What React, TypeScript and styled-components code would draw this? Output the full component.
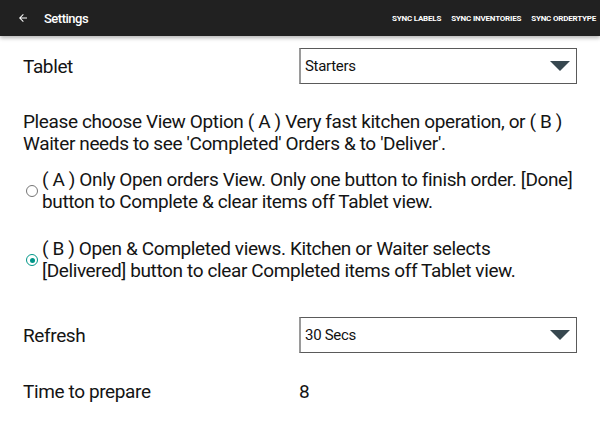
import styled, { createGlobalStyle } from "styled-components";

const GlobalStyle = createGlobalStyle`
  body {
    margin: 0;
    background: #ffffff;
    font-family: Roboto, "Liberation Sans", sans-serif;
    color: #141414;
  }
`;

const Toolbar = styled.header`
  height: 36px;
  background: #212121;
  display: flex;
  align-items: center;
  padding: 0 4px 0 17px;
  box-shadow: 0 2px 4px rgba(0, 0, 0, 0.3);
  position: relative;
`;

const BackButton = styled.span`
  display: flex;
  align-items: center;
  width: 27px;
`;

const Title = styled.h1`
  margin: 0;
  flex: 1;
  color: #ffffff;
  font-size: 13px;
  font-weight: 500;
  letter-spacing: -0.5px;
`;

const Actions = styled.nav`
  display: flex;
  gap: 10px;
`;

const Action = styled.span`
  color: #ffffff;
  font-size: 8px;
  font-weight: 700;
  letter-spacing: -0.2px;
  text-transform: uppercase;
`;

const Content = styled.main`
  padding: 12px 23px 0;
  font-size: 19px;
  letter-spacing: -0.38px;
`;

const FieldRow = styled.div<{ $mt?: number }>`
  display: grid;
  grid-template-columns: 276px 278px;
  align-items: center;
  min-height: 36px;
  margin-top: ${(p) => p.$mt ?? 0}px;
`;

const Label = styled.span``;

const Select = styled.div`
  height: 36px;
  box-sizing: border-box;
  border: 1px solid #5a5a5a;
  border-left: 2px solid #9a9a9a;
  display: flex;
  align-items: center;
  justify-content: space-between;
  padding: 0 6px 0 4px;
  font-size: 15px;
  letter-spacing: -0.3px;
  color: #111;
`;

const Caret = styled.span`
  width: 0;
  height: 0;
  border-left: 10px solid transparent;
  border-right: 10px solid transparent;
  border-top: 10px solid #37474f;
`;

const Value = styled.span``;

const Intro = styled.p`
  margin: 27px 0 0;
  line-height: 22px;
`;

const Option = styled.label<{ $mt: number }>`
  display: flex;
  align-items: center;
  margin-top: ${(p) => p.$mt}px;
  line-height: 22px;
  white-space: nowrap;
`;

const Radio = styled.span<{ $checked?: boolean }>`
  flex: none;
  width: 12px;
  height: 12px;
  box-sizing: border-box;
  border-radius: 50%;
  border: 1.5px solid ${(p) => (p.$checked ? "#009688" : "#757575")};
  margin: 0 4px 0 3px;
  display: flex;
  align-items: center;
  justify-content: center;
  &::after {
    content: "";
    width: 5px;
    height: 5px;
    border-radius: 50%;
    background: ${(p) => (p.$checked ? "#009688" : "transparent")};
  }
`;

const Arrow = () => (
  <svg width="12" height="12" viewBox="0 0 24 24">
    <path d="M20 11H7.83l5.59-5.59L12 4l-8 8 8 8 1.41-1.41L7.83 13H20v-2z" fill="#fff" />
  </svg>
);

export default function App() {
  return (
    <>
      <GlobalStyle />
      <Toolbar>
        <BackButton>
          <Arrow />
        </BackButton>
        <Title>Settings</Title>
        <Actions>
          <Action>Sync Labels</Action>
          <Action>Sync Inventories</Action>
          <Action>Sync Ordertype</Action>
        </Actions>
      </Toolbar>
      <Content>
        <FieldRow>
          <Label>Tablet</Label>
          <Select>
            Starters
            <Caret />
          </Select>
        </FieldRow>
        <Intro>
          Please choose View Option ( A ) Very fast kitchen operation, or ( B )
          Waiter needs to see 'Completed' Orders &amp; to 'Deliver'.
        </Intro>
        <Option $mt={14}>
          <Radio />
          <span>
            ( A ) Only Open orders View. Only one button to finish order. [Done]
            <br />
            button to Complete &amp; clear items off Tablet view.
          </span>
        </Option>
        <Option $mt={25}>
          <Radio $checked />
          <span>
            ( B ) Open &amp; Completed views. Kitchen or Waiter selects
            <br />
            [Delivered] button to clear Completed items off Tablet view.
          </span>
        </Option>
        <FieldRow $mt={35}>
          <Label>Refresh</Label>
          <Select>
            30 Secs
            <Caret />
          </Select>
        </FieldRow>
        <FieldRow $mt={20}>
          <Label>Time to prepare</Label>
          <Value>8</Value>
        </FieldRow>
      </Content>
    </>
  );
}
